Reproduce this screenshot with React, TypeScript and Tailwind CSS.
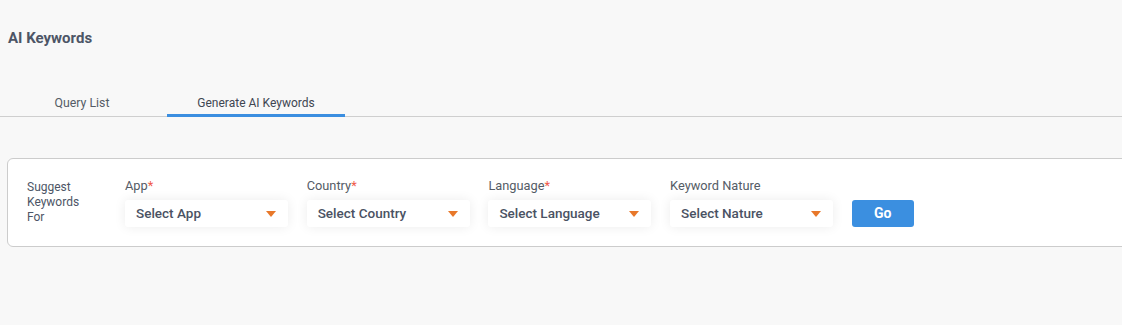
import React from 'react';

const fields = [
  { label: 'App', required: true, placeholder: 'Select App' },
  { label: 'Country', required: true, placeholder: 'Select Country' },
  { label: 'Language', required: true, placeholder: 'Select Language' },
  { label: 'Keyword Nature', required: false, placeholder: 'Select Nature' },
];

function Caret() {
  return (
    <svg width="10" height="6" viewBox="0 0 10 6" className="shrink-0">
      <polygon points="0,0 10,0 5,6" fill="#e8782a" />
    </svg>
  );
}

export default function App() {
  return (
    <div className="min-h-[325px] bg-[#f8f8f8] font-['Roboto',sans-serif] text-[#4a5263]">
      <div className="px-2 pt-[29px]">
        <h1 className="text-[15px] font-bold leading-[18px] text-[#4d5566]">AI Keywords</h1>
      </div>

      <div className="mt-[48px] flex border-b border-[#cfcfcf]">
        <div className="w-[164px] flex justify-center pb-[5px]">
          <span className="text-[12.3px] leading-[16px] text-[#555c66]">Query List</span>
        </div>
        <div className="ml-[3px] w-[178px] flex justify-center pb-[3px] border-b-[3px] border-[#3b8ee0] -mb-px">
          <span className="text-[12px] leading-[16px] text-[#3f4652]">Generate AI Keywords</span>
        </div>
      </div>

      <div className="mt-[41px] ml-[7px] -mr-2 bg-white border border-[#cccccc] rounded-md h-[89px] flex items-start pl-[19px]">
        <div className="w-[98px] pt-[21px] text-[12px] leading-[15px] text-[#4d5566]">
          Suggest
          <br />
          Keywords
          <br />
          For
        </div>
        <div className="flex items-end gap-[18.7px] pt-[19px]">
          {fields.map(f => (
            <div key={f.label} className="flex flex-col w-[163px]">
              <div className="text-[12.8px] leading-[16px] text-[#555c66] mb-[6px]">
                {f.label}
                {f.required && <span className="text-[#f05a4a]">*</span>}
              </div>
              <div className="h-[27px] bg-white rounded-[3px] shadow-[0_0_12px_rgba(0,0,0,0.08)] flex items-center justify-between pl-[11px] pr-[12px]">
                <span className="text-[13.5px] font-medium text-[#4a5263]">{f.placeholder}</span>
                <Caret />
              </div>
            </div>
          ))}
          <button className="h-[27px] w-[62px] bg-[#3b8fe0] rounded-[3px] text-white text-[14px] font-bold">Go</button>
        </div>
      </div>
    </div>
  );
}
